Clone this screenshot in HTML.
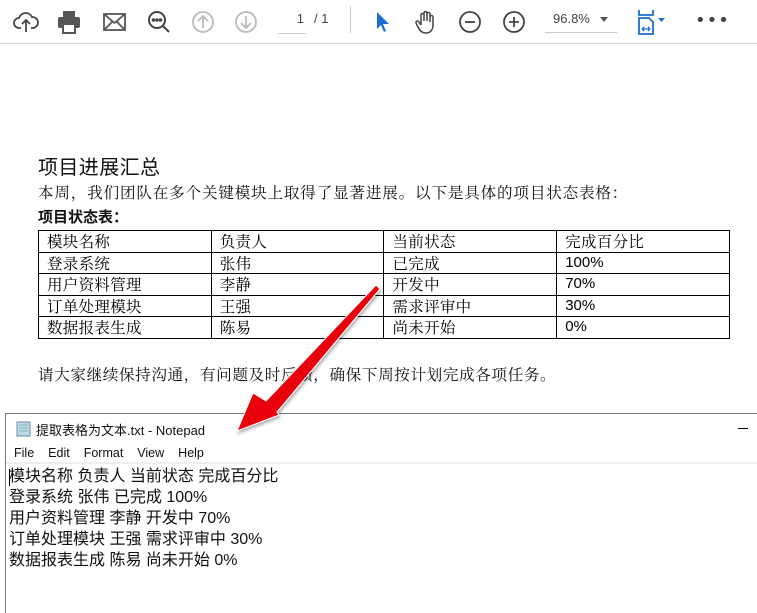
<!DOCTYPE html>
<html><head><meta charset="utf-8"><style>
*{margin:0;padding:0;box-sizing:border-box}
body{width:757px;height:599px;background:#fff;position:relative;overflow:hidden;font-family:"Noto Serif CJK SC","Noto Serif CJK JP",serif}
.tb{position:absolute;left:0;top:0;width:757px;height:44px;background:#fff;border-bottom:1px solid #d4d4d4}
.ic{position:absolute;top:8px}
.sans{font-family:"Liberation Sans","Noto Sans CJK SC",sans-serif}
table{position:absolute;left:38px;top:230px;border-collapse:collapse;width:692px;font-size:15.5px}
td{border:1px solid #000;height:21.6px;padding:1px 0 0 8px;width:173px;line-height:18px;vertical-align:top;letter-spacing:.3px}
td.n{font-family:"Liberation Sans",sans-serif;font-size:15px;letter-spacing:0}
.np{position:absolute;left:5px;top:413px;width:760px;height:200px;border-top:1px solid #777;border-left:1px solid #777;background:#fff}
</style></head><body>
<div class="tb">
<svg class="ic" style="left:12px" width="28" height="28" viewBox="0 0 28 28" fill="none" stroke="#444" stroke-width="1.8"><path d="M9 20H7a5 5 0 0 1 0-10 7 7 0 0 1 13-1 5 5 0 0 1 1 11h-2"/><path d="M14 24V12M10 16l4-4 4 4"/></svg>
<svg class="ic" style="left:55px" width="28" height="28" viewBox="0 0 28 28" fill="#555"><rect x="8" y="3" width="12" height="6"/><rect x="3" y="9" width="22" height="11" rx="2"/><rect x="8" y="16" width="12" height="9" fill="#fff" stroke="#555" stroke-width="2"/></svg>
<svg class="ic" style="left:101px" width="28" height="28" viewBox="0 0 28 28" fill="none" stroke="#555" stroke-width="1.8"><rect x="3" y="6" width="21" height="16"/><path d="M3 6l10.5 9L24 6M3 22l8-8M24 22l-8-8"/></svg>
<svg class="ic" style="left:145px" width="28" height="28" viewBox="0 0 28 28" fill="none" stroke="#444" stroke-width="2"><circle cx="12" cy="12" r="8"/><path d="M18 18l6 6"/><circle cx="8.5" cy="12" r=".8" fill="#444"/><circle cx="12" cy="12" r=".8" fill="#444"/><circle cx="15.5" cy="12" r=".8" fill="#444"/></svg>
<svg class="ic" style="left:189px" width="28" height="28" viewBox="0 0 28 28" fill="none" stroke="#bbb" stroke-width="1.8"><circle cx="14" cy="14" r="10"/><path d="M14 20V8M9 13l5-5 5 5"/></svg>
<svg class="ic" style="left:232px" width="28" height="28" viewBox="0 0 28 28" fill="none" stroke="#bbb" stroke-width="1.8"><circle cx="14" cy="14" r="10"/><path d="M14 8v12M9 15l5 5 5-5"/></svg>
<div class="sans" style="position:absolute;left:278px;top:11px;width:28px;text-align:right;font-size:13px;color:#444;padding-right:2px">1</div>
<div style="position:absolute;left:278px;top:33px;width:28px;border-top:1px solid #ccc"></div>
<div class="sans" style="position:absolute;left:314px;top:11px;font-size:13px;color:#444">/ 1</div>
<div style="position:absolute;left:350px;top:6px;height:27px;border-left:1px solid #ccc"></div>
<svg class="ic" style="left:368px" width="28" height="28" viewBox="0 0 28 28"><path d="M9 4l12 12h-6l3 7-2 1-3-7-4 4z" fill="#1a6fd0"/></svg>
<svg class="ic" style="left:412px" width="28" height="28" viewBox="0 0 28 28" fill="none" stroke="#444" stroke-width="1.5"><path d="M9 17V7a1.5 1.5 0 0 1 3 0v6V5a1.5 1.5 0 0 1 3 0v8V6a1.5 1.5 0 0 1 3 0v8V9a1.5 1.5 0 0 1 3 0v8c0 5-3 8-7 8s-6-2-8-6l-2-4a1.5 1.5 0 0 1 2.5-1.5L9 17"/></svg>
<svg class="ic" style="left:456px" width="28" height="28" viewBox="0 0 28 28" fill="none" stroke="#444" stroke-width="1.8"><circle cx="14" cy="14" r="10"/><path d="M9 14h10"/></svg>
<svg class="ic" style="left:500px" width="28" height="28" viewBox="0 0 28 28" fill="none" stroke="#444" stroke-width="1.8"><circle cx="14" cy="14" r="10"/><path d="M9 14h10M14 9v10"/></svg>
<div class="sans" style="position:absolute;left:553px;top:11px;font-size:13px;color:#444">96.8%</div>
<div style="position:absolute;left:600px;top:17px;border:4px solid transparent;border-top:5px solid #555"></div>
<div style="position:absolute;left:545px;top:32px;width:72px;border-top:1px solid #ccc"></div>
<svg class="ic" style="left:636px" width="36" height="30" viewBox="0 0 36 30" fill="none" stroke="#1a6fd0" stroke-width="1.8"><path d="M3 2v5h14V2M3 10v16h14V14l-4-4z"/><path d="M6 21h8M6 21l2-2M6 21l2 2M14 21l-2-2M14 21l-2 2" stroke-width="1.3"/><path d="M22 10h7l-3.5 4z" fill="#1a6fd0" stroke="none"/></svg>
<div style="position:absolute;left:695px;top:10px;font-size:18px;color:#444;letter-spacing:1px;font-family:'DejaVu Sans',sans-serif">•••</div>
</div>

<div class="sans" style="position:absolute;left:38px;top:151px;font-size:20px;color:#111;letter-spacing:.4px">项目进展汇总</div>
<div style="position:absolute;left:38px;top:181px;font-size:15.6px;color:#111;white-space:nowrap;letter-spacing:.8px">本周，我们团队在多个关键模块上取得了显著进展。以下是具体的项目状态表格：</div>
<div class="sans" style="position:absolute;left:38px;top:206px;font-size:15px;font-weight:bold;color:#111">项目状态表：</div>
<table>
<tr><td>模块名称</td><td>负责人</td><td>当前状态</td><td>完成百分比</td></tr>
<tr><td>登录系统</td><td>张伟</td><td>已完成</td><td class="n">100%</td></tr>
<tr><td>用户资料管理</td><td>李静</td><td>开发中</td><td class="n">70%</td></tr>
<tr><td>订单处理模块</td><td>王强</td><td>需求评审中</td><td class="n">30%</td></tr>
<tr><td>数据报表生成</td><td>陈易</td><td>尚未开始</td><td class="n">0%</td></tr>
</table>
<div style="position:absolute;left:38px;top:363px;font-size:15.6px;color:#111;white-space:nowrap;letter-spacing:.6px">请大家继续保持沟通，有问题及时反馈，确保下周按计划完成各项任务。</div>

<div class="np sans">
<svg style="position:absolute;left:9px;top:6px" width="18" height="18" viewBox="0 0 18 18"><rect x="2" y="2" width="13" height="14" fill="#bcd8ea" stroke="#6a8ea8"/><path d="M4 5h9M4 8h9M4 11h9" stroke="#7aa" stroke-width=".8"/></svg>
<div style="position:absolute;left:30px;top:6px;font-size:13px;color:#111">提取表格为文本.txt - Notepad</div>
<div style="position:absolute;left:732px;top:14px;width:10px;border-top:1px solid #000"></div>
<div style="position:absolute;left:8px;top:32px;font-size:12.5px;color:#111"><span style="margin-right:14px">File</span><span style="margin-right:14px">Edit</span><span style="margin-right:14px">Format</span><span style="margin-right:14px">View</span><span>Help</span></div>
<div style="position:absolute;left:0;top:48px;width:760px;border-top:2px solid #eee"></div>
<div style="position:absolute;left:3px;top:52px;font-size:16px;line-height:21px;color:#111">模块名称 负责人 当前状态 完成百分比<br>登录系统 张伟 已完成 100%<br>用户资料管理 李静 开发中 70%<br>订单处理模块 王强 需求评审中 30%<br>数据报表生成 陈易 尚未开始 0%</div>
<div style="position:absolute;left:3px;top:55px;height:17px;border-left:1px solid #000"></div>
</div>

<svg style="position:absolute;left:0;top:0" width="757" height="599"><defs><filter id="s"><feDropShadow dx="1" dy="2" stdDeviation="1.5" flood-opacity=".35"/></filter></defs>
<path d="M376 285L380 289L277 412L279 415L237 431L253 393L266 401Z" fill="#e8000a" stroke="#fff" stroke-width="1" filter="url(#s)"/></svg>
</body></html>
